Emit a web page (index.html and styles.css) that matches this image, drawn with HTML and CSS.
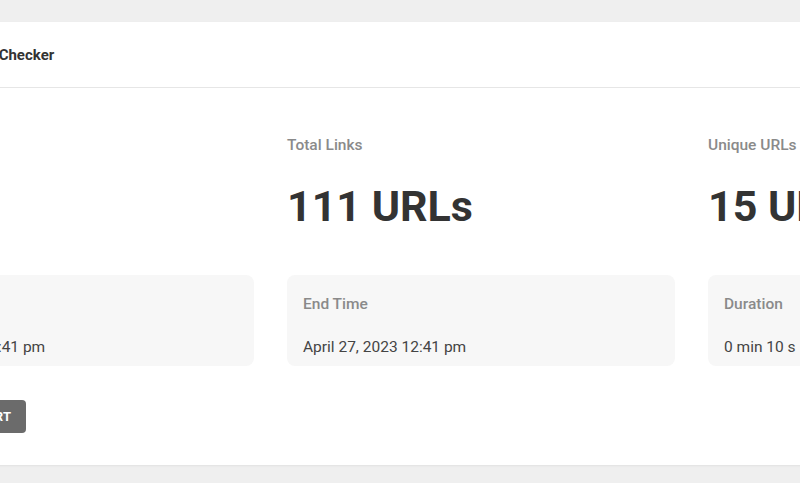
FILE: index.html
```html
<!DOCTYPE html>
<html lang="en">
<head>
<meta charset="utf-8">
<title>Broken Link Checker</title>
<link rel="stylesheet" href="styles.css">
</head>
<body>
<div class="page">
  <div class="card">
    <div class="card-header">
      <span class="title">Broken Link Checker</span>
    </div>
    <div class="card-body">
      <div class="stats">
        <div class="stat">
          <div class="stat-label">Broken</div>
          <div class="stat-value">0 URL</div>
        </div>
        <div class="stat">
          <div class="stat-label">Total Links</div>
          <div class="stat-value">111 URLs</div>
        </div>
        <div class="stat">
          <div class="stat-label">Unique URLs</div>
          <div class="stat-value">15 URLs</div>
        </div>
      </div>
      <div class="boxes">
        <div class="box">
          <div class="box-label">Start Time</div>
          <div class="box-value">April 27, 2023 12:41 pm</div>
        </div>
        <div class="box">
          <div class="box-label">End Time</div>
          <div class="box-value">April 27, 2023 12:41 pm</div>
        </div>
        <div class="box">
          <div class="box-label">Duration</div>
          <div class="box-value">0 min 10 s</div>
        </div>
      </div>
      <div class="actions">
        <button class="btn">Download Report</button>
      </div>
    </div>
  </div>
</div>
</body>
</html>
```

FILE: styles.css
```css
html, body {
  margin: 0;
  padding: 0;
}
body {
  background: #efefef;
  font-family: Roboto, "Liberation Sans", sans-serif;
  overflow: hidden;
  width: 800px;
  height: 483px;
}
.page {
  padding-top: 22px;
}
.card {
  background: #ffffff;
  margin-left: -158px;
  width: 1300px;
  box-shadow: 0 1px 2px rgba(0,0,0,0.06);
}
.card-header {
  height: 65px;
  display: flex;
  align-items: center;
  padding-left: 73px;
  border-bottom: 1px solid #e6e6e6;
}
.title {
  font-size: 15px;
  font-weight: 700;
  color: #333333;
}
.card-body {
  padding: 48px 24px 32px;
}
.stats, .boxes {
  display: grid;
  grid-template-columns: repeat(3, 388px);
  column-gap: 33px;
}
.stat-label {
  font-size: 15.5px;
  line-height: 18px;
  font-weight: 500;
  color: #8a8a8a;
}
.stat-value {
  margin-top: 26px;
  font-size: 43px;
  line-height: 53px;
  font-weight: 700;
  color: #333333;
}
.boxes {
  margin-top: 42px;
}
.box {
  background: #f7f7f7;
  border-radius: 8px;
  padding: 20px 16px 11px;
  height: 91px;
  box-sizing: border-box;
}
.box-label {
  font-size: 15.5px;
  line-height: 18px;
  font-weight: 500;
  color: #8a8a8a;
}
.box-value {
  margin-top: 25px;
  font-size: 15.5px;
  line-height: 19px;
  color: #444444;
}
.actions {
  margin-top: 34px;
  display: flex;
}
.btn {
  background: #6b6b6b;
  color: #ffffff;
  border: none;
  border-radius: 4px;
  height: 33px;
  padding: 0 15px 0 18px;
  font-family: Roboto, "Liberation Sans", sans-serif;
  font-size: 13px;
  font-weight: 700;
  text-transform: uppercase;
  letter-spacing: 0.3px;
}
```
